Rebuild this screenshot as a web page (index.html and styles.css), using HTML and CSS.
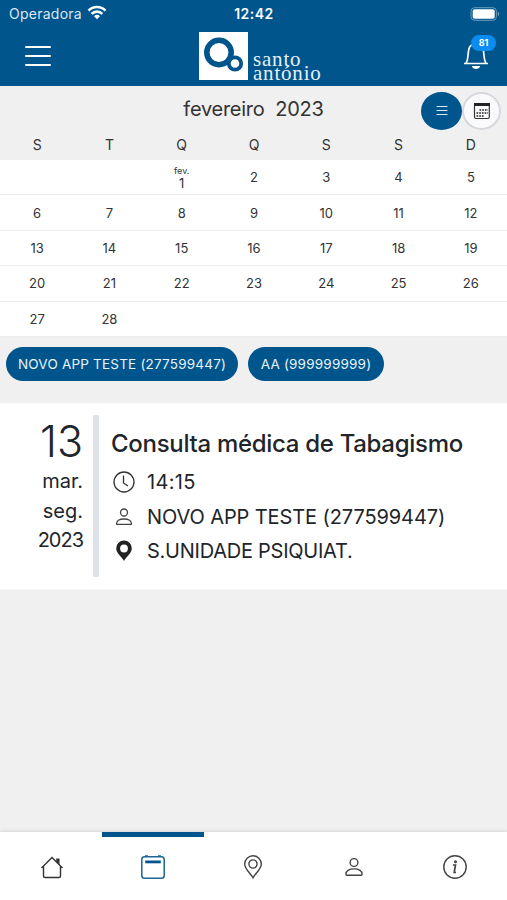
FILE: index.html
```html
<!DOCTYPE html>
<html lang="pt">
<head>
    <meta charset="UTF-8">
    <meta name="viewport" content="width=device-width, initial-scale=1.0">
    <title>santo antónio</title>
    <link rel="stylesheet" href="styles.css">
</head>
<body>

    <header class="header">
        <div class="status">
            <div class="carrier">
                <span>Operadora</span>
                <svg width="20" height="15" viewBox="0 0 20 15" fill="none" stroke="#fff" stroke-width="2.6">
                    <path d="M1.5 5.6a12 12 0 0 1 17 0M4.6 8.9a7.6 7.6 0 0 1 10.8 0"/>
                    <path d="M10 14.2l-3-3a4.3 4.3 0 0 1 6 0z" fill="#fff" stroke="none"/>
                </svg>
            </div>
            <div class="time">12:42</div>
            <svg class="battery" width="30" height="14" viewBox="0 0 30 14">
                <rect x="1" y="0.7" width="25.4" height="12.6" rx="3.6" fill="none" stroke="#6f9dbe"/>
                <rect x="2.7" y="2.2" width="22" height="9.6" rx="2" fill="#fff"/>
                <path d="M27.8 4.8c1.8.6 1.8 3.8 0 4.4z" fill="#6f9dbe"/>
            </svg>
        </div>
        <div class="toolbar">
            <div class="menu"><span></span><span></span><span></span></div>
            <div class="logo">
                <svg width="49" height="48" viewBox="0 0 49 48">
                    <rect width="49" height="48" fill="#fff"/>
                    <circle cx="20" cy="20.5" r="12.2" fill="none" stroke="#00558c" stroke-width="5.6"/>
                    <circle cx="36" cy="31.5" r="6.2" fill="#fff" stroke="#00558c" stroke-width="3.8"/>
                </svg>
                <div class="logo-text">santo<br>antónio</div>
            </div>
            <div class="bell">
                <svg width="26" height="32" viewBox="0 0 26 32">
                    <path d="M1 24.5h24M3.2 24C5.5 20 4.7 14 6 9.5 7 6.5 9.8 5 13 5s6 1.5 7 4.5c1.3 4.5.5 10.500 2.800 14.500" fill="none" stroke="#fff" stroke-width="1.7"/>
                    <path d="M8.8 27h8.4c-.8 4-7.6 4-8.4 0z" fill="#fff"/>
                </svg>
                <span class="badge">81</span>
            </div>
        </div>
    </header>

    <section class="calendar">
        <div class="month">
            <div class="month-name">fevereiro&nbsp; 2023</div>
            <div class="views">
                <div class="view active">
                    <svg width="12" height="12" viewBox="0 0 12 12" stroke="#d5e8f5" stroke-width="1.1"><path d="M.5 1.500h11M.5 5.500h11M.5 9.500h11"/></svg>
                </div>
                <div class="view">
                    <svg width="18" height="18" viewBox="0 0 18 18">
                        <rect x="1.5" y="1.5" width="14.8" height="15" rx="1.5" fill="none" stroke="#333" stroke-width="1.2"/>
                        <path d="M1 1h16v3H1z" fill="#222"/>
                        <path d="M6.5 8h8.5M3.5 11h11.5M3.5 14h8" stroke="#222" stroke-width="1.7" stroke-dasharray="1.7 1"/>
                    </svg>
                </div>
            </div>
        </div>
        <div class="week names">
            <span>S</span><span>T</span><span>Q</span><span>Q</span><span>S</span><span>S</span><span>D</span>
        </div>
        <div class="week"><span></span><span></span><span class="first"><small>fev.</small>1</span><span>2</span><span>3</span><span>4</span><span>5</span></div>
        <div class="week"><span>6</span><span>7</span><span>8</span><span>9</span><span>10</span><span>11</span><span>12</span></div>
        <div class="week"><span>13</span><span>14</span><span>15</span><span>16</span><span>17</span><span>18</span><span>19</span></div>
        <div class="week"><span>20</span><span>21</span><span>22</span><span>23</span><span>24</span><span>25</span><span>26</span></div>
        <div class="week"><span>27</span><span>28</span><span></span><span></span><span></span><span></span><span></span></div>
    </section>

    <div class="chips">
        <div class="chip chip-wide">NOVO APP TESTE (277599447)</div>
        <div class="chip">AA (999999999)</div>
    </div>

    <section class="event">
        <div class="date">
            <div class="day">13</div>
            <div>mar.</div>
            <div>seg.</div>
            <div class="year">2023</div>
        </div>
        <div class="info">
            <h2>Consulta médica de Tabagismo</h2>
            <div class="row">
                <svg width="24" height="24" viewBox="0 0 24 24" fill="none" stroke="#333" stroke-width="1.3">
                    <circle cx="12" cy="12" r="10"/>
                    <path d="M11.5 5.5V13l4.5 3"/>
                </svg>
                <span class="hour">14:15</span>
            </div>
            <div class="row">
                <svg width="24" height="24" viewBox="0 0 24 24" fill="none" stroke="#444" stroke-width="1.3">
                    <circle cx="12" cy="7.5" r="3.5"/>
                    <path d="M4.5 19.3c-.3-3.800 3-5.300 7.500-5.300s7.800 1.500 7.500 5.300z" stroke-linejoin="round"/>
                </svg>
                <span class="person">NOVO APP TESTE (277599447)</span>
            </div>
            <div class="row">
                <svg width="24" height="24" viewBox="0 0 24 24">
                    <path d="M12 22C9.500 17.500 4.200 14.500 4.200 9.300a7.800 7.800 0 0 1 15.600 0C19.800 14.500 14.500 17.500 12 22zM12 5.600a3.900 3.900 0 1 0 0 7.800 3.900 3.900 0 0 0 0-7.800z" fill="#222" fill-rule="evenodd"/>
                </svg>
                <span class="place">S.UNIDADE PSIQUIAT.</span>
            </div>
        </div>
    </section>

    <nav class="tabs">
        <div class="tab">
            <svg width="26" height="26" viewBox="0 0 26 26" fill="none" stroke="#333" stroke-width="1.4">
                <path d="M2.500 14L13 3.500 23.500 14M4.500 12v10q0 1.500 1.500 1.500h14q1.500 0 1.500-1.500V12"/>
                <path d="M17.200 4.500h3.300v6.200l-3.300-3z" fill="#333" stroke="none"/>
            </svg>
        </div>
        <div class="tab current">
            <svg width="26" height="26" viewBox="0 0 26 26" fill="none" stroke="#1c6597" stroke-width="1.5">
                <rect x="1.8" y="2.8" width="22.4" height="21.4" rx="2.8"/>
                <path d="M5 2h3M18 2h3"/>
                <path d="M5.200 7.900h15.600" stroke="#00558c" stroke-width="2.8"/>
            </svg>
        </div>
        <div class="tab">
            <svg width="26" height="26" viewBox="0 0 26 26" fill="none" stroke="#444" stroke-width="1.4">
                <path d="M13 23.800C11 19.500 4.700 15.500 4.700 10a8.300 8.300 0 0 1 16.600 0C21.300 15.500 15 19.500 13 23.800z"/>
                <circle cx="13" cy="10" r="4.1"/>
            </svg>
        </div>
        <div class="tab">
            <svg width="26" height="26" viewBox="0 0 26 26" fill="none" stroke="#444" stroke-width="1.4">
                <circle cx="13" cy="8.500" r="3.9"/>
                <path d="M4.900 20.300c-.2-3.500 3.300-5.400 8.100-5.400s8.300 1.900 8.100 5.400q0 .9-1 .9H5.900q-1 0-1-.9z"/>
            </svg>
        </div>
        <div class="tab">
            <svg width="26" height="26" viewBox="0 0 26 26" fill="none" stroke="#444" stroke-width="1.4">
                <circle cx="13" cy="13" r="11.2"/>
                <path d="M11 11h2.500l-1.300 7.500h1.800" stroke-width="1.7"/>
                <circle cx="13.5" cy="7.8" r="1.500" fill="#444" stroke="none"/>
            </svg>
        </div>
    </nav>

</body>
</html>
```
FILE: styles.css
```css
* {
    box-sizing: border-box;
}
body {
    font-family: Inter, "Liberation Sans", sans-serif;
    margin: 0;
    height: 900px;
    display: flex;
    flex-direction: column;
    background-color: #f0f0f0;
    color: #212529;
    overflow: hidden;
}
svg {
    display: block;
    flex: none;
}
.header {
    height: 86px;
    background-color: #00558c;
    color: #fff;
}
.status {
    height: 27px;
    padding: 0 7px 0 9px;
    display: grid;
    grid-template-columns: 1fr auto 1fr;
    align-items: center;
    font-size: 14px;
}
.carrier {
    display: flex;
    align-items: center;
    gap: 5px;
    color: #d9e8f3;
    letter-spacing: 0.25px;
}
.carrier svg {
    margin-top: -2px;
}
.time {
    font-weight: 600;
    letter-spacing: 0.5px;
    margin-left: -1px;
}
.battery {
    justify-self: end;
}
.toolbar {
    height: 59px;
    padding: 0 13px 0 25px;
    display: grid;
    grid-template-columns: 174px 1fr auto;
}
.menu {
    width: 26px;
    padding-top: 19px;
    display: flex;
    flex-direction: column;
    gap: 7px;
}
.menu span {
    height: 2px;
    border-radius: 1px;
    background-color: #fff;
}
.logo {
    display: flex;
    gap: 5px;
    padding-top: 5px;
}
.logo-text {
    padding-top: 20px;
    font-family: "Liberation Serif", serif;
    font-size: 21px;
    letter-spacing: 0.8px;
    line-height: 14px;
    color: #e5f0f8;
}
.bell {
    position: relative;
    padding-top: 12px;
    width: 31px;
}
.badge {
    position: absolute;
    top: 8px;
    left: 8px;
    width: 25px;
    height: 16px;
    border-radius: 8px;
    background-color: #0a8cf0;
    font-size: 9px;
    font-weight: 700;
    line-height: 16px;
    text-align: center;
}
.calendar {
    height: 251px;
    border-bottom: 1px solid #e6e6e6;
}
.month {
    height: 43px;
    display: grid;
    grid-template-columns: 1fr auto 1fr;
}
.month-name {
    grid-column: 2;
    font-size: 20px;
    letter-spacing: -0.25px;
    line-height: 46px;
    color: #333;
}
.views {
    display: flex;
    justify-content: flex-end;
    padding: 6px 6px 0 0;
}
.view {
    width: 39px;
    height: 38px;
    border: 2px solid #d5d8dd;
    border-radius: 50%;
    background-color: #fafafc;
    display: flex;
    align-items: center;
    justify-content: center;
}
.view.active {
    width: 41px;
    border-color: #00558c;
    background-color: #00558c;
}
.week {
    height: 35.4px;
    padding-left: 1px;
    display: grid;
    grid-template-columns: repeat(7, 1fr);
    align-items: center;
    text-align: center;
    background-color: #fff;
    border-bottom: 1px solid #ededed;
    font-size: 13px;
    color: #333;
}
.week.names {
    height: 31px;
    background-color: transparent;
    border-bottom: none;
    font-size: 14px;
}
.first small {
    display: block;
    font-size: 9px;
    line-height: 11px;
}
.first {
    line-height: 14px;
}
.chips {
    height: 66px;
    padding: 10px 6px;
    display: flex;
    gap: 10px;
}
.chip {
    width: 136px;
    height: 34px;
    border-radius: 17px;
    background-color: #00558c;
    color: #e8f3fa;
    font-size: 13.5px;
    letter-spacing: 0.2px;
    line-height: 34px;
    text-align: center;
    white-space: nowrap;
}
.chip-wide {
    width: 232px;
}
.event {
    height: 187px;
    padding: 12px 0;
    display: flex;
    background-color: #fff;
    border-bottom: 1px solid #f5f5f5;
}
.date {
    width: 99px;
    height: 162px;
    padding-right: 10px;
    border-right: 6px solid #dee2e6;
    text-align: right;
    font-size: 20px;
    line-height: 29.5px;
}
.day {
    font-size: 43px;
    font-weight: 300;
    line-height: 52px;
}
.year {
    letter-spacing: -1px;
}
.info {
    padding-left: 12px;
    white-space: nowrap;
}
.info h2 {
    margin: 13px 0 7px;
    padding-top: 1px;
    font-size: 24px;
    font-weight: 500;
    letter-spacing: -0.3px;
    line-height: 29px;
}
.row {
    height: 34.4px;
    padding-left: 1px;
    display: flex;
    align-items: center;
    gap: 11px;
    font-size: 20px;
}
.hour {
    letter-spacing: 0.3px;
}
.person {
    letter-spacing: -0.1px;
}
.place {
    letter-spacing: -0.25px;
}
.tabs {
    height: 68px;
    margin-top: auto;
    padding: 0 2px;
    display: grid;
    grid-template-columns: repeat(5, 1fr);
    background-color: #fff;
    box-shadow: 0 -1px 3px #d5d5d5;
}
.tab {
    display: flex;
    justify-content: center;
    padding-top: 17px;
    border-top: 5px solid transparent;
}
.tab.current {
    margin: 0 -1px;
    border-color: #00558c;
}
```
